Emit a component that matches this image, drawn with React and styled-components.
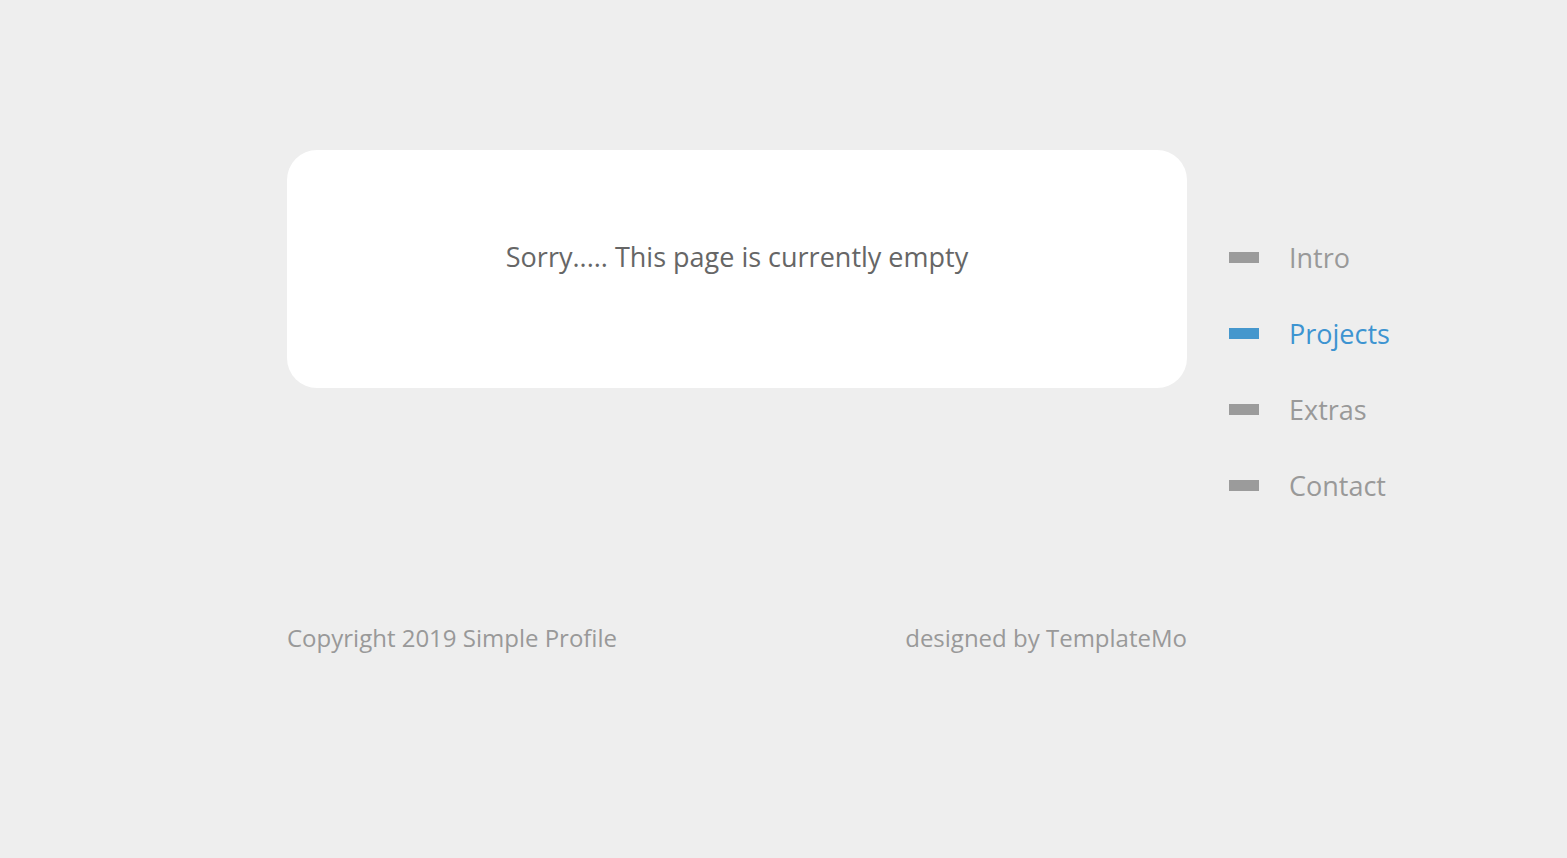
import styled, { createGlobalStyle } from "styled-components";

const GlobalStyle = createGlobalStyle`
  body {
    margin: 0;
    background: #eeeeee;
    font-family: "Open Sans", "Liberation Sans", sans-serif;
  }
`;

const navItems = [
  { label: "Intro" },
  { label: "Projects", active: true },
  { label: "Extras" },
  { label: "Contact" },
];

export default function App() {
  return (
    <>
      <GlobalStyle />
      <Page>
        <Main>
          <Card>
            <Message>Sorry..... This page is currently empty</Message>
          </Card>
          <Footer>
            <FooterText>Copyright 2019 Simple Profile</FooterText>
            <FooterText>designed by TemplateMo</FooterText>
          </Footer>
        </Main>

        <Nav>
          {navItems.map((item) => (
            <NavItem key={item.label} $active={item.active}>
              <NavBar $active={item.active} />
              {item.label}
            </NavItem>
          ))}
        </Nav>
      </Page>
    </>
  );
}

const Page = styled.div`
  display: flex;
  width: 100%;
  min-height: 858px;
  padding: 150px 0 0 287px;
  box-sizing: border-box;
`;

const Main = styled.div`
  display: flex;
  flex-direction: column;
  width: 900px;
`;

const Card = styled.div`
  display: flex;
  justify-content: center;
  align-items: flex-start;
  height: 238px;
  padding-top: 87px;
  box-sizing: border-box;
  border-radius: 30px;
  background: #fff;
`;

const Message = styled.p`
  margin: 0;
  font-size: 27px;
  line-height: 40px;
  color: #666;
`;

const Footer = styled.footer`
  display: flex;
  justify-content: space-between;
  margin-top: 233px;
`;

const FooterText = styled.p`
  margin: 0;
  font-size: 24px;
  line-height: 34px;
  color: #999;
`;

const Nav = styled.ul`
  display: flex;
  flex-direction: column;
  gap: 36px;
  margin: 87px 0 0 42px;
  padding: 0;
  list-style: none;
`;

const NavItem = styled.li`
  display: flex;
  align-items: center;
  gap: 30px;
  height: 40px;
  font-size: 27px;
  color: ${(p) => (p.$active ? "#3d94d1" : "#999")};
  cursor: pointer;
`;

const NavBar = styled.span`
  display: block;
  width: 30px;
  height: 11px;
  background: ${(p) => (p.$active ? "#4597cd" : "#9b9b9b")};
`;
